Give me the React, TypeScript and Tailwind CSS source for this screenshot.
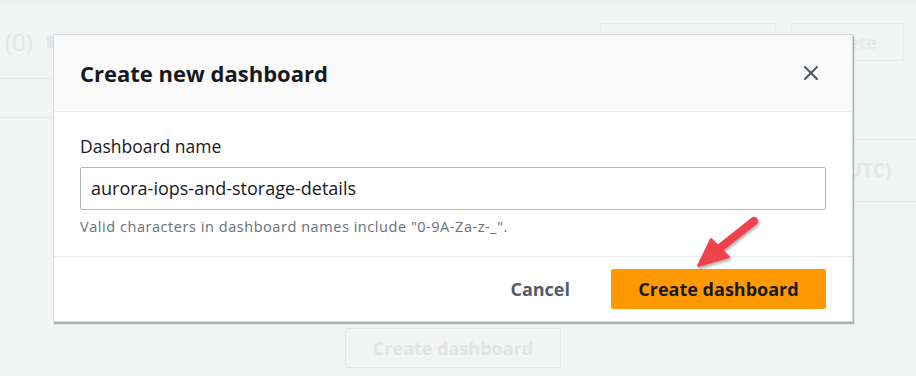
import { X } from 'lucide-react';

const font = { fontFamily: '"Open Sans", "Noto Sans", Arial, sans-serif' };

const Arrow = () => (
  <svg className="absolute left-[690px] top-[210px]" width="80" height="70" viewBox="0 0 80 70">
    <defs>
      <filter id="sh" x="-30%" y="-30%" width="160%" height="160%">
        <feDropShadow dx="1" dy="2" stdDeviation="1.5" floodColor="#000" floodOpacity="0.35" />
      </filter>
    </defs>
    <g filter="url(#sh)" fill="#f0434b" stroke="#f0434b">
      <line x1="64" y1="11" x2="30" y2="38" strokeWidth="8" strokeLinecap="round" />
      <polygon points="8,56 21,29 39,47" strokeWidth="2" strokeLinejoin="round" />
    </g>
  </svg>
);

export default function App() {
  return (
    <div className="relative h-[376px] w-[916px] overflow-hidden bg-[#f2f3f3]" style={font}>
      {/* faded page behind the dialog */}
      <div className="border-t-[3px] border-[#eef0f0]">
        <div className="flex h-[75px] items-start justify-between pl-[5px] pr-[12px] pt-[20px]">
          <div className="flex items-center gap-[14px] text-[24px] leading-[38px] text-[#e3e6e6]">
            <span>(0)</span>
            <span className="h-[12px] w-[6px] bg-[#e0e6ea]" />
          </div>
          <div className="flex items-center gap-[15px]">
            <div className="h-[38px] w-[176px] rounded-[2px] border border-[#e9ebeb]" />
            <div className="flex h-[38px] w-[113px] items-center justify-center rounded-[2px] border border-[#e9ebeb] text-[18px] font-bold text-[#e7e9e9]">
              Delete
            </div>
          </div>
        </div>
        <div className="flex justify-between">
          <div className="w-[53px]">
            <div className="h-[39px] border-t border-[#e6e9e9]" />
            <div className="border-t border-[#e6e9e9]" />
          </div>
          <div className="mt-[61px] w-[63px]">
            <div className="flex h-[63px] items-center border-y border-[#e6e9e9] text-[19px] font-bold text-[#e4e6e6]">
              <span className="-ml-[12px]">(UTC)</span>
            </div>
          </div>
        </div>
        <div className="mt-[126px] flex">
          <div className="ml-[345px] flex h-[40px] w-[216px] items-center justify-center rounded-[2px] border border-[#e3e6e6] text-[18px] font-bold text-[#e3e5e5]">
            Create dashboard
          </div>
        </div>
      </div>

      {/* dialog */}
      <div className="absolute left-[53px] top-[34px] w-[800px] border border-[#d5dbdb] bg-white shadow-[1px_2px_1px_0_rgba(0,28,36,0.3)]">
        <div className="flex h-[77px] items-center justify-between border-b border-[#eaeded] bg-[#fafafa] pl-[26px] pr-[29px]">
          <h2 className="text-[22px] font-bold text-[#16191f]">Create new dashboard</h2>
          <X className="h-[24px] w-[24px] text-[#545b64]" strokeWidth={2.2} />
        </div>
        <div className="h-[144px] px-[26px] pt-[22px]">
          <div className="text-[17.5px] leading-[24px] text-[#16191f]">Dashboard name</div>
          <div className="mt-[9px] flex h-[43px] items-center rounded-[2px] border border-[#aab7b8] px-[10px] text-[18px] text-[#16191f]">
            aurora-iops-and-storage-details
          </div>
          <div className="mt-[7px] text-[14.5px] leading-[20px] tracking-[0.55px] text-[#687078]">
            Valid characters in dashboard names include "0-9A-Za-z-_".
          </div>
        </div>
        <div className="flex h-[65px] items-center justify-end gap-[41px] border-t border-[#eaeded] pr-[26px]">
          <span className="text-[18px] font-bold text-[#545b64]">Cancel</span>
          <button className="h-[40px] w-[215px] rounded-[2px] bg-[#ff9900] text-[18px] font-bold text-[#16191f]">
            Create dashboard
          </button>
        </div>
      </div>

      <Arrow />
    </div>
  );
}
